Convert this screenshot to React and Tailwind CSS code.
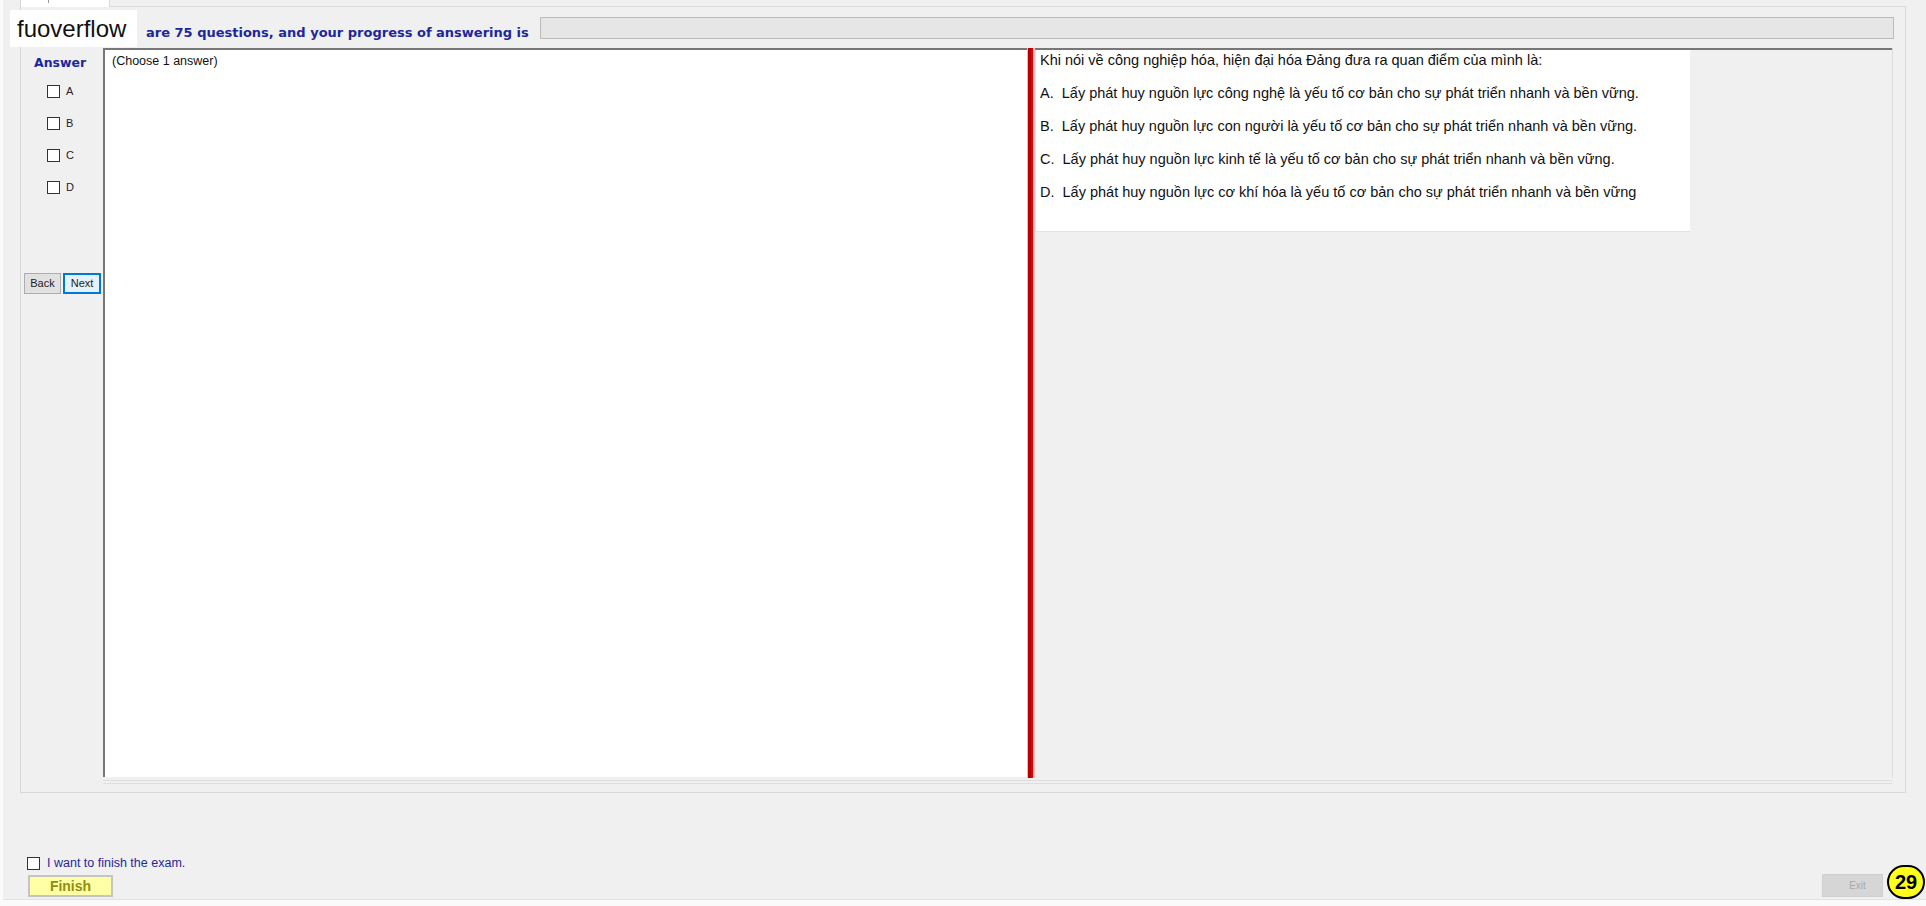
import React from 'react';

const FONT = { fontFamily: '"Liberation Sans", Arial, sans-serif' };
const WIDE = { fontFamily: '"DejaVu Sans", Verdana, sans-serif' };

const questionLines = [
  'Khi nói về công nghiệp hóa, hiện đại hóa Đảng đưa ra quan điểm của mình là:',
  'A.  Lấy phát huy nguồn lực công nghệ là yếu tố cơ bản cho sự phát triển nhanh và bền vững.',
  'B.  Lấy phát huy nguồn lực con người là yếu tố cơ bản cho sự phát triển nhanh và bền vững.',
  'C.  Lấy phát huy nguồn lực kinh tế là yếu tố cơ bản cho sự phát triển nhanh và bền vững.',
  'D.  Lấy phát huy nguồn lực cơ khí hóa là yếu tố cơ bản cho sự phát triển nhanh và bền vững',
];

const Box = () => (
  <div className="w-[13px] h-[13px] bg-white border border-[#333333] shrink-0" />
);

const AnswerColumn = () => (
  <div className="w-[80px] shrink-0 flex flex-col">
    {/* Title */}
    <div className="mt-[8px] ml-[11px] text-[12.5px] leading-[14px] font-bold text-[#1d2799]" style={WIDE}>
      Answer
    </div>

    {/* Options */}
    <div className="mt-[15px] ml-[24px] flex flex-col gap-[19px]">
      {['A', 'B', 'C', 'D'].map((k) => (
        <div key={k} className="flex items-center h-[13px] gap-[6px]">
          <Box />
          <span className="text-[11px] text-[#222222] leading-[13px]">{k}</span>
        </div>
      ))}
    </div>

    {/* Back / Next */}
    <div className="mt-[79px] ml-[1px] flex gap-[2px]">
      <button className="w-[37px] h-[21px] bg-[#e1e1e1] border border-[#adadad] text-[11px] text-[#222222] leading-none">
        Back
      </button>
      <button className="w-[38px] h-[21px] bg-[#e5f1fb] border-2 border-[#0078d7] text-[11px] text-[#222222] leading-none">
        Next
      </button>
    </div>
  </div>
);

const Splitter = () => (
  <div className="w-[8px] shrink-0 flex h-[730px]">
    <div className="w-[1px] bg-[#f0b4b4]" />
    <div className="w-[3px] bg-[#b80000]" />
    <div className="w-[2px] bg-[#e60000]" />
    <div className="w-[2px] bg-[#f3c9c9]" />
  </div>
);

export default function App() {
  return (
    <div className="relative w-[1926px] h-[906px] bg-[#fafafa] overflow-hidden" style={FONT}>
      <div className="ml-[3px] w-[1923px] h-[900px] bg-[#f0f0f0] flex flex-col border-b border-[#e2e2e2]">
        {/* Tab strip */}
        <div className="h-[6px] relative">
          <div className="ml-[17px] w-[90px] h-[7px] bg-white border-x border-[#d9d9d9] relative">
            <div className="absolute left-[27px] top-0 w-[1px] h-[3px] bg-[#9a9a9a]" />
          </div>
        </div>

        {/* Main tab page */}
        <div className="ml-[17px] w-[1886px] h-[787px] border border-[#d9d9d9] bg-[#f0f0f0] pl-[2px] flex flex-col">
          {/* Header */}
          <div className="h-[41px] flex items-start">
            <div
              className="w-[517px] pl-[123px] mt-[19px] text-[13px] leading-[14px] font-bold text-[#1d2799] whitespace-nowrap"
              style={WIDE}
            >
              are 75 questions, and your progress of answering is
            </div>
            <div className="mt-[10px] w-[1354px] h-[22px] bg-[#e6e6e6] border border-[#bcbcbc]" />
          </div>

          {/* Content */}
          <div className="flex w-[1870px] border-r border-[#dcdcdc]">
            <AnswerColumn />

            <div className="w-[924px] h-[729px] bg-white border-t-2 border-l-2 border-[#777777] pl-[7px] pt-[4px]">
              <div className="text-[12.5px] leading-[14px] text-[#111111]">(Choose 1 answer)</div>
            </div>

            <Splitter />

            <div className="w-[857px] h-[729px] border-t-2 border-[#777777]">
              <div className="w-[655px] h-[182px] bg-white border-l border-[#a0a0a0] border-b border-[#e2e2e2] pl-[4px] pt-[2px] flex flex-col gap-[17px]">
                {questionLines.map((l, i) => (
                  <div key={i} className="text-[14.5px] leading-[16px] text-[#111111] whitespace-pre">
                    {l}
                  </div>
                ))}
              </div>
            </div>
          </div>

          {/* Bottom scroll lines */}
          <div className="ml-[80px] w-[1789px] mt-[2px] h-[4px] border-y border-[#dedede]" />
        </div>

        {/* Footer */}
        <div className="flex-1 flex justify-between items-end">
          <div className="ml-[24px] mb-[2px] flex flex-col">
            <div className="flex items-center gap-[7px]">
              <Box />
              <span className="text-[12.5px] leading-[14px] text-[#27279a]">I want to finish the exam.</span>
            </div>
            <button className="mt-[5px] ml-[1px] w-[85px] h-[22px] bg-[#ffffa6] border-2 border-[#c4c4c4] text-[14px] font-bold text-[#8f8f10] leading-none">
              Finish
            </button>
          </div>

          <div className="flex items-end mr-[1px]">
            <button className="mb-[2px] w-[61px] h-[23px] bg-[#d6d6d6] border border-[#cfcfcf] text-[10px] text-[#a9a9a9] leading-none pl-[10px]">
              Exit
            </button>
            <div className="ml-[4px] w-[38px] h-[34px] rounded-full bg-[#ffff1a] border-2 border-black flex items-center justify-center text-[20px] font-bold text-black leading-none">
              29
            </div>
          </div>
        </div>
      </div>

      {/* Watermark label over the header */}
      <div className="absolute left-[10px] top-[10px] w-[127px] h-[37px] bg-white pl-[7px] flex items-center text-[24px] leading-none text-[#111111]">
        fuoverflow
      </div>
    </div>
  );
}
